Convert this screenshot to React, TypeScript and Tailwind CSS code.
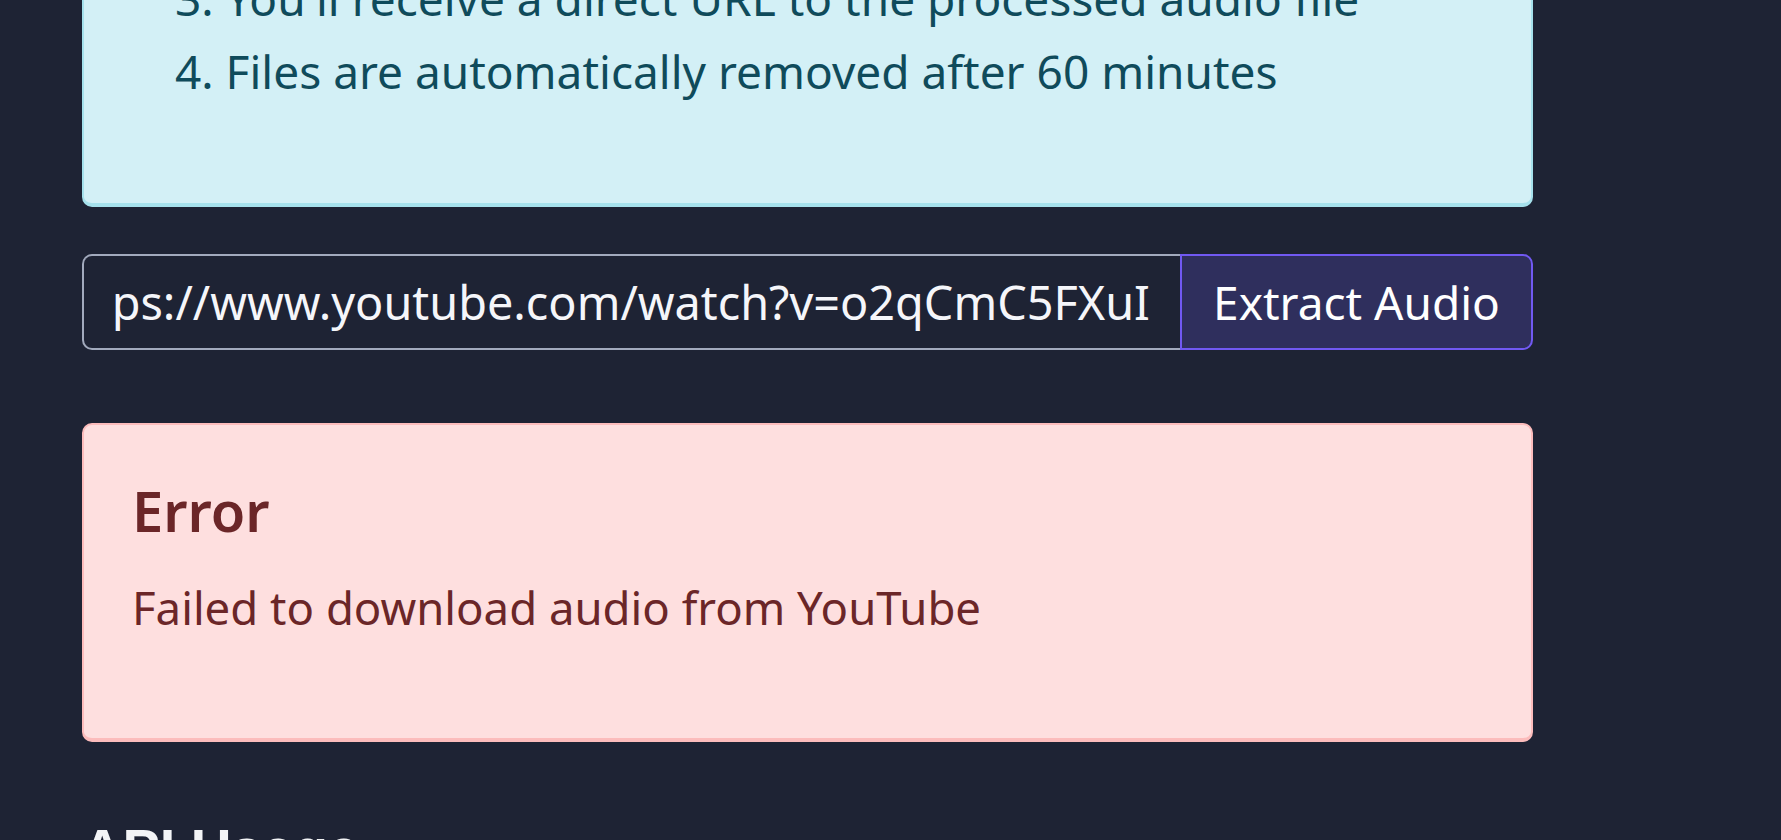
import React from "react";

export default function App() {
  const font = { fontFamily: '"Noto Sans", "Open Sans", sans-serif' };
  return (
    <div className="min-h-screen bg-[#1e2334] overflow-hidden" style={font}>
      <div className="w-[1451px] ml-[82px] flex flex-col">
        <div className="-mt-[50px] bg-[#d3f0f6] border-2 border-b-4 border-[#a6e1ec] rounded-[10px] pl-[91px] pb-[95px] pt-[10px] text-[#0f4b5b] text-[46px] leading-[73px]">
          <ol className="list-none">
            <li>3. You'll receive a direct URL to the processed audio file</li>
            <li>4. Files are automatically removed after 60 minutes</li>
          </ol>
        </div>

        <div className="mt-[47px] flex h-[96px]">
          <div className="flex-1 min-w-0 border-2 border-r-0 border-[#a2aabd] rounded-l-[10px] bg-[#1e2334] px-[30px] flex items-center overflow-hidden">
            <div className="w-full overflow-hidden flex justify-end whitespace-nowrap text-[46.8px] text-[#f5f6fa]">
              <span className="shrink-0">https://www.youtube.com/watch?v=o2qCmC5FXuI</span>
            </div>
          </div>
          <button className="w-[353px] shrink-0 border-2 border-[#7159f2] rounded-r-[10px] bg-[#2f2f5d] text-[46px] text-white flex items-center justify-center">
            Extract Audio
          </button>
        </div>

        <div className="mt-[73px] h-[319px] bg-[#fedfdf] border-2 border-b-4 border-[#fcbcbc] rounded-[10px] px-[48px] pt-[57px] text-[#6b2628]">
          <h3 className="text-[56px] font-semibold leading-none">Error</h3>
          <p className="mt-[47px] text-[45.5px] leading-none">Failed to download audio from YouTube</p>
        </div>

        <h2 className="mt-[79px] text-[56px] font-bold text-[#f3f4f6] leading-none" style={{ fontFamily: '"Liberation Sans", Arial, sans-serif' }}>
          API Usage
        </h2>
      </div>
    </div>
  );
}
